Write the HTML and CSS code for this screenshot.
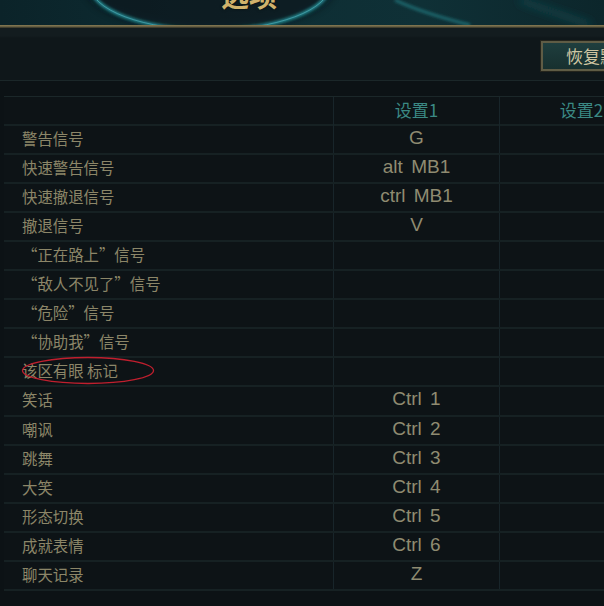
FILE: index.html
```html
<!DOCTYPE html>
<html lang="zh-CN">
<head>
<meta charset="utf-8">
<title>选项</title>
<link rel="stylesheet" href="styles.css">
</head>
<body>
<div class="page">
  <header class="banner">
    <svg class="banner-art" width="604" height="25" viewBox="0 0 604 25" aria-hidden="true">
      <defs>
        <linearGradient id="bg" x1="0" y1="0" x2="1" y2="0">
          <stop offset="0" stop-color="#0b2329"/>
          <stop offset="0.35" stop-color="#0d2d33"/>
          <stop offset="0.7" stop-color="#0f3036"/>
          <stop offset="1" stop-color="#0c262b"/>
        </linearGradient>
        <filter id="blur" x="-20%" y="-50%" width="140%" height="200%">
          <feGaussianBlur stdDeviation="1.6"/>
        </filter>
        <filter id="blur2" x="-20%" y="-50%" width="140%" height="200%">
          <feGaussianBlur stdDeviation="4"/>
        </filter>
      </defs>
      <rect width="604" height="25" fill="url(#bg)"/>
      <ellipse cx="210" cy="-15" rx="125" ry="45" fill="#07191d" opacity="0.7" filter="url(#blur2)"/>
      <ellipse cx="210" cy="-15" rx="120" ry="45" fill="none" stroke="#2aa9b2" stroke-width="3" opacity="0.85" filter="url(#blur)"/>
      <ellipse cx="210" cy="-15" rx="120" ry="45" fill="none" stroke="#7fe6ea" stroke-width="0.7" opacity="0.5"/>
      <path d="M395 0 C 420 12, 450 20, 470 25" fill="none" stroke="#1f6c72" stroke-width="3" filter="url(#blur)"/>
      <path d="M520 0 C 540 8, 565 16, 590 25" fill="none" stroke="#174f55" stroke-width="4" filter="url(#blur2)"/>
    </svg>
    <h1 class="title">选项</h1>
  </header>
  <div class="gold-line"></div>
  <div class="toolbar">
    <button class="reset-btn" type="button">恢复默认</button>
  </div>
  <div class="sep"></div>

  <div class="table">
    <div class="row head">
      <div class="cell label"></div>
      <div class="cell key">设置1</div>
      <div class="cell key">设置2</div>
    </div>
    <div class="row"><div class="cell label">警告信号</div><div class="cell key">G</div><div class="cell key"></div></div>
    <div class="row"><div class="cell label">快速警告信号</div><div class="cell key">alt MB1</div><div class="cell key"></div></div>
    <div class="row"><div class="cell label">快速撤退信号</div><div class="cell key">ctrl MB1</div><div class="cell key"></div></div>
    <div class="row"><div class="cell label">撤退信号</div><div class="cell key">V</div><div class="cell key"></div></div>
    <div class="row"><div class="cell label">“正在路上”信号</div><div class="cell key"></div><div class="cell key"></div></div>
    <div class="row"><div class="cell label">“敌人不见了”信号</div><div class="cell key"></div><div class="cell key"></div></div>
    <div class="row"><div class="cell label">“危险”信号</div><div class="cell key"></div><div class="cell key"></div></div>
    <div class="row"><div class="cell label">“协助我”信号</div><div class="cell key"></div><div class="cell key"></div></div>
    <div class="row"><div class="cell label marked">该区有眼 标记<svg class="circle" width="136" height="31" viewBox="0 0 136 31" aria-hidden="true"><ellipse cx="68" cy="15.5" rx="65.5" ry="13" fill="none" stroke="#c01f2e" stroke-width="1.3"/></svg></div><div class="cell key"></div><div class="cell key"></div></div>
    <div class="row"><div class="cell label">笑话</div><div class="cell key">Ctrl 1</div><div class="cell key"></div></div>
    <div class="row"><div class="cell label">嘲讽</div><div class="cell key">Ctrl 2</div><div class="cell key"></div></div>
    <div class="row"><div class="cell label">跳舞</div><div class="cell key">Ctrl 3</div><div class="cell key"></div></div>
    <div class="row"><div class="cell label">大笑</div><div class="cell key">Ctrl 4</div><div class="cell key"></div></div>
    <div class="row"><div class="cell label">形态切换</div><div class="cell key">Ctrl 5</div><div class="cell key"></div></div>
    <div class="row"><div class="cell label">成就表情</div><div class="cell key">Ctrl 6</div><div class="cell key"></div></div>
    <div class="row"><div class="cell label">聊天记录</div><div class="cell key">Z</div><div class="cell key"></div></div>
  </div>
</div>
</body>
</html>
```

FILE: styles.css
```css
html, body {
  margin: 0;
  padding: 0;
  background: #0c1215;
  overflow: hidden;
}

.page {
  width: 604px;
  height: 606px;
  overflow: hidden;
  background: #0c1215;
  font-family: "Noto Sans CJK SC", "Liberation Sans", sans-serif;
}

.banner {
  position: relative;
  height: 25px;
  overflow: hidden;
}

.banner-art {
  position: absolute;
  left: 0;
  top: 0;
  display: block;
}

.title {
  position: relative;
  margin: 0;
  padding-left: 221px;
  margin-top: -22px;
  font-size: 28px;
  line-height: 34px;
  font-weight: 700;
  color: #d0b26c;
  text-shadow: 0 0 3px rgba(0, 0, 0, 0.6);
}

.gold-line {
  height: 3px;
  background: linear-gradient(to bottom, #8a7d54, #5f5a40 60%, #2a2a22);
}

.toolbar {
  height: 52px;
  box-sizing: border-box;
  padding-top: 13px;
  background: linear-gradient(to bottom, #131c1f 0, #131c1f 8px, #0f171a 10px, #0f171a 100%);
  display: flex;
  justify-content: flex-start;
}

.reset-btn {
  margin-left: 541px;
  width: 100px;
  height: 30px;
  flex: none;
  box-sizing: border-box;
  border: 2px solid #5f5c45;
  outline: 1px solid #24241c;
  background: linear-gradient(to bottom, #1f3e3e, #17302f);
  color: #cfc6a2;
  font-family: "Noto Sans CJK SC", sans-serif;
  font-size: 17px;
  line-height: 24px;
  padding: 0 0 0 23px;
  text-align: left;
  white-space: nowrap;
}

.sep {
  height: 16px;
  border-top: 1px solid #1b2729;
  background: #0c1215;
  box-sizing: border-box;
}

.table {
  margin-left: 4px;
  width: 660px;
  border-top: 1px solid #1b2729;
}

.row {
  display: grid;
  grid-template-columns: 330px 166px 164px;
  height: 29.05px;
  box-sizing: border-box;
  border-bottom: 2px solid #162123;
  background: #0d1316;
}

.cell {
  display: flex;
  align-items: center;
  border-right: 1px solid #18252a;
  box-sizing: border-box;
  white-space: nowrap;
  padding-bottom: 3px;
}

.label {
  padding-left: 18px;
  font-size: 15.4px;
  color: #8c8668;
}

.marked {
  position: relative;
}

.circle {
  position: absolute;
  left: 16px;
  top: -3px;
}

.key {
  justify-content: center;
  font-family: "Liberation Sans", "Noto Sans CJK SC", sans-serif;
  font-size: 19px;
  color: #8f8b71;
  word-spacing: 3px;
}

.head .key {
  font-family: "Noto Sans CJK SC", sans-serif;
  font-size: 17px;
  color: #3b8984;
  padding-bottom: 4px;
}
```
